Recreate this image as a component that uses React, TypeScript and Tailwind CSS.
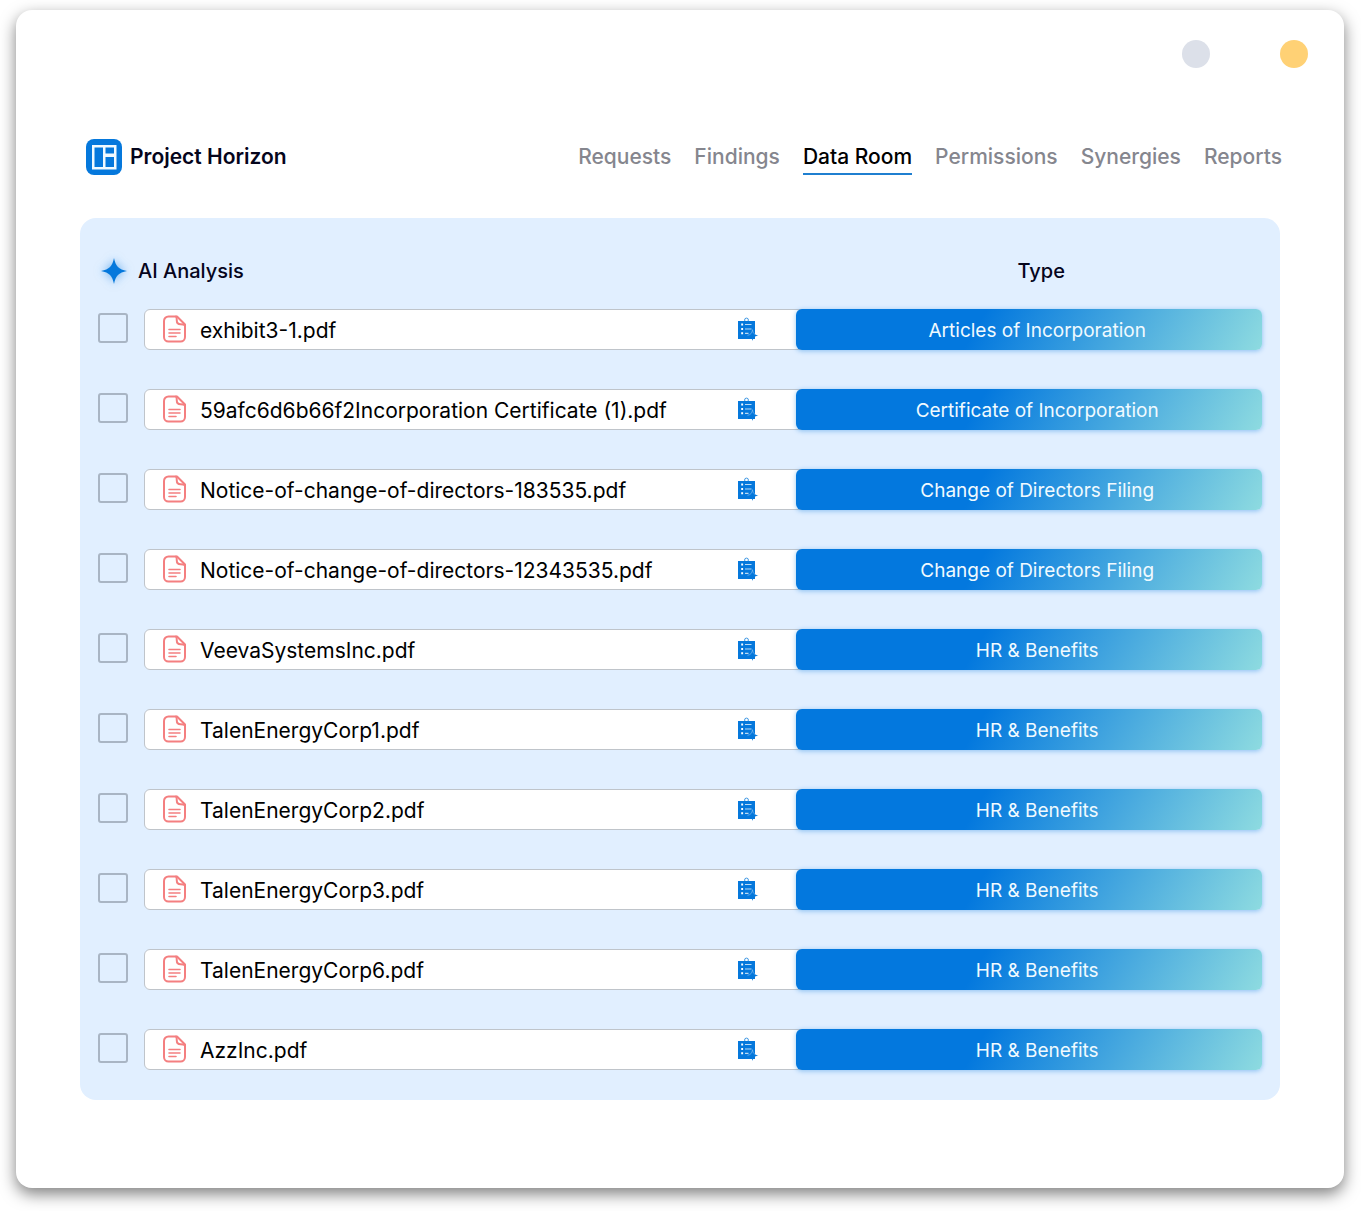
const navItems = ["Requests", "Findings", "Data Room", "Permissions", "Synergies", "Reports"];

const documents = [
    { name: "exhibit3-1.pdf", type: "Articles of Incorporation" },
    { name: "59afc6d6b66f2Incorporation Certificate (1).pdf", type: "Certificate of Incorporation" },
    { name: "Notice-of-change-of-directors-183535.pdf", type: "Change of Directors Filing" },
    { name: "Notice-of-change-of-directors-12343535.pdf", type: "Change of Directors Filing" },
    { name: "VeevaSystemsInc.pdf", type: "HR & Benefits" },
    { name: "TalenEnergyCorp1.pdf", type: "HR & Benefits" },
    { name: "TalenEnergyCorp2.pdf", type: "HR & Benefits" },
    { name: "TalenEnergyCorp3.pdf", type: "HR & Benefits" },
    { name: "TalenEnergyCorp6.pdf", type: "HR & Benefits" },
    { name: "AzzInc.pdf", type: "HR & Benefits" },
];

function LogoIcon() {
    return (
        <svg className="size-9 shrink-0" viewBox="0 0 36 36" aria-hidden="true">
            <rect width="36" height="36" rx="8" fill="#0578dc" />
            <rect x="6" y="6" width="24.500" height="24.500" fill="#f0faff" />
            <path d="M8.500 8.500h8.500v19.500h-8.500zM19.500 8.500h8.500v6h-8.500zM19.500 18h8.500v10h-8.500z" fill="#0578dc" />
        </svg>
    );
}

function SparkIcon() {
    return (
        <svg
            className="size-7 shrink-0 drop-shadow-[0_0_5px_rgba(5,120,220,0.55)]"
            viewBox="0 0 28 28"
            aria-hidden="true"
        >
            <path
                d="M14 1c1.600 8.200 4.600 11.300 13 13-8.400 1.700-11.400 4.800-13 13-1.600-8.200-4.600-11.300-13-13 8.400-1.700 11.400-4.800 13-13Z"
                fill="#0578dc"
            />
        </svg>
    );
}

function PdfIcon() {
    return (
        <svg
            className="h-7 w-6 shrink-0"
            viewBox="0 0 24 28"
            fill="none"
            stroke="#f47f80"
            strokeWidth="2"
            strokeLinecap="round"
            strokeLinejoin="round"
            aria-hidden="true"
        >
            <path d="M14 1.500H5.500A4.500 4.500 0 0 0 1 6v16a4.500 4.500 0 0 0 4.500 4.500h12A4.500 4.500 0 0 0 22 22V9.500Z" />
            <path d="M13 1.500c.8 1 .8 2.500.8 4 0 2.500 1.200 3.800 3.700 3.800 1.800 0 3.300 0 4.300.8" />
            <path d="M6 14.500h11M6 18h11M6 21.500h7" strokeWidth="1.600" />
        </svg>
    );
}

function SummaryIcon() {
    return (
        <svg className="h-6 w-[22px]" viewBox="0 0 22 24" fill="none" aria-hidden="true">
            <circle cx="9.500" cy="3" r="1.900" stroke="#3f97e3" strokeWidth="1" />
            <path d="M1 4h17v18H1z" fill="#0578dc" />
            <path d="M8 7.500h6.500M8 12h6.500M8 16.300h3.500" stroke="#b9dcf8" strokeWidth="1.200" />
            <path d="M4.200 7.500h1.900M4.200 12h1.900M4.200 16.300h1.900" stroke="#fff" strokeWidth="1.900" />
            <path
                d="M15.500 12.500c.7 4 1.900 5.300 6 6-4.100.7-5.300 2-6 5.500-.7-3.500-1.900-4.800-6-5.500 4.100-.7 5.300-2 6-6Z"
                fill="#0578dc"
            />
            <path d="M10.500 18.300c3.300-.7 4.400-1.900 5-5.600.4 2.400 1 3.700 2.300 4.600" stroke="#8fc5f2" strokeWidth=".6" />
        </svg>
    );
}

export default function App() {
    return (
        <div className="flow-root min-h-screen bg-white font-['Inter','Liberation_Sans',sans-serif] text-black">
            <div className="mt-[10px] mr-[17px] mb-5 ml-4 rounded-2xl bg-white px-16 pt-[30px] pb-[88px] shadow-[0_6px_16px_rgba(0,0,0,0.5)]">
                {/* Window buttons */}
                <div className="-mr-7 flex justify-end gap-[70px]">
                    <span className="size-7 rounded-full bg-[#dce0e9]" />
                    <span className="size-7 rounded-full bg-[#ffd175]" />
                </div>

                <header className="mt-[71px] flex items-center justify-between">
                    <div className="flex items-center gap-2 pl-[6px]">
                        <LogoIcon />
                        <h1 className="text-[21px] leading-7 font-semibold text-[#05051c]">Project Horizon</h1>
                    </div>
                    <nav className="-mr-[2px] flex gap-[23px] text-[21px] leading-8 font-medium">
                        {navItems.map((item) => (
                            <a
                                key={item}
                                href="#"
                                aria-current={item === "Data Room" ? "page" : undefined}
                                className={
                                    item === "Data Room"
                                        ? "border-y-2 border-t-transparent border-b-[#1f7fd0] text-black"
                                        : "border-y-2 border-transparent text-[#85868e]"
                                }
                            >
                                {item}
                            </a>
                        ))}
                    </nav>
                </header>

                <main className="mt-[43px] rounded-2xl bg-[#e1efff] px-[18px] pt-8 pb-[11px]">
                    <table className="w-full table-fixed border-collapse">
                        <colgroup>
                            <col className="w-[46px]" />
                            <col />
                            <col className="w-2/5" />
                        </colgroup>
                        <thead>
                            <tr className="h-[39px] text-[20px] text-[#05051c]">
                                <th colSpan={2} className="p-0 text-left font-medium">
                                    <div className="flex items-center gap-[10px] pt-[3px] pl-[2px]">
                                        <SparkIcon />
                                        AI Analysis
                                    </div>
                                </th>
                                <th className="p-0 pt-[3px] pl-6 font-medium">Type</th>
                            </tr>
                        </thead>
                        <tbody>
                            {documents.map((doc, i) => (
                                <tr key={doc.name} className="h-20">
                                    <td className="p-0">
                                        <input
                                            id={`doc-${i}`}
                                            type="checkbox"
                                            className="mb-[3px] block size-[30px] appearance-none rounded-[3px] border-2 border-[#a9b5c4] checked:bg-[#0578dc]"
                                        />
                                    </td>
                                    <td className="p-0">
                                        <div className="-mr-2 flex h-[41px] items-center rounded-l-md border border-[#bfc4ca] bg-white pr-11 pl-[18px]">
                                            <label
                                                htmlFor={`doc-${i}`}
                                                className="flex flex-1 items-center gap-[13px] text-[21px] leading-7 whitespace-nowrap"
                                            >
                                                <PdfIcon />
                                                <span className="pt-1">{doc.name}</span>
                                            </label>
                                            <button type="button" aria-label="AI Analysis">
                                                <SummaryIcon />
                                            </button>
                                        </div>
                                    </td>
                                    <td className="p-0">
                                        <div className="relative h-[41px] rounded-md bg-linear-[120deg,#0378de_39%,#8edbe0] pl-4 text-center text-[19px] leading-[44px] text-[#f0faff] shadow-[0_1px_5px_rgba(5,120,220,0.4)]">
                                            {doc.type}
                                        </div>
                                    </td>
                                </tr>
                            ))}
                        </tbody>
                    </table>
                </main>
            </div>
        </div>
    );
}
